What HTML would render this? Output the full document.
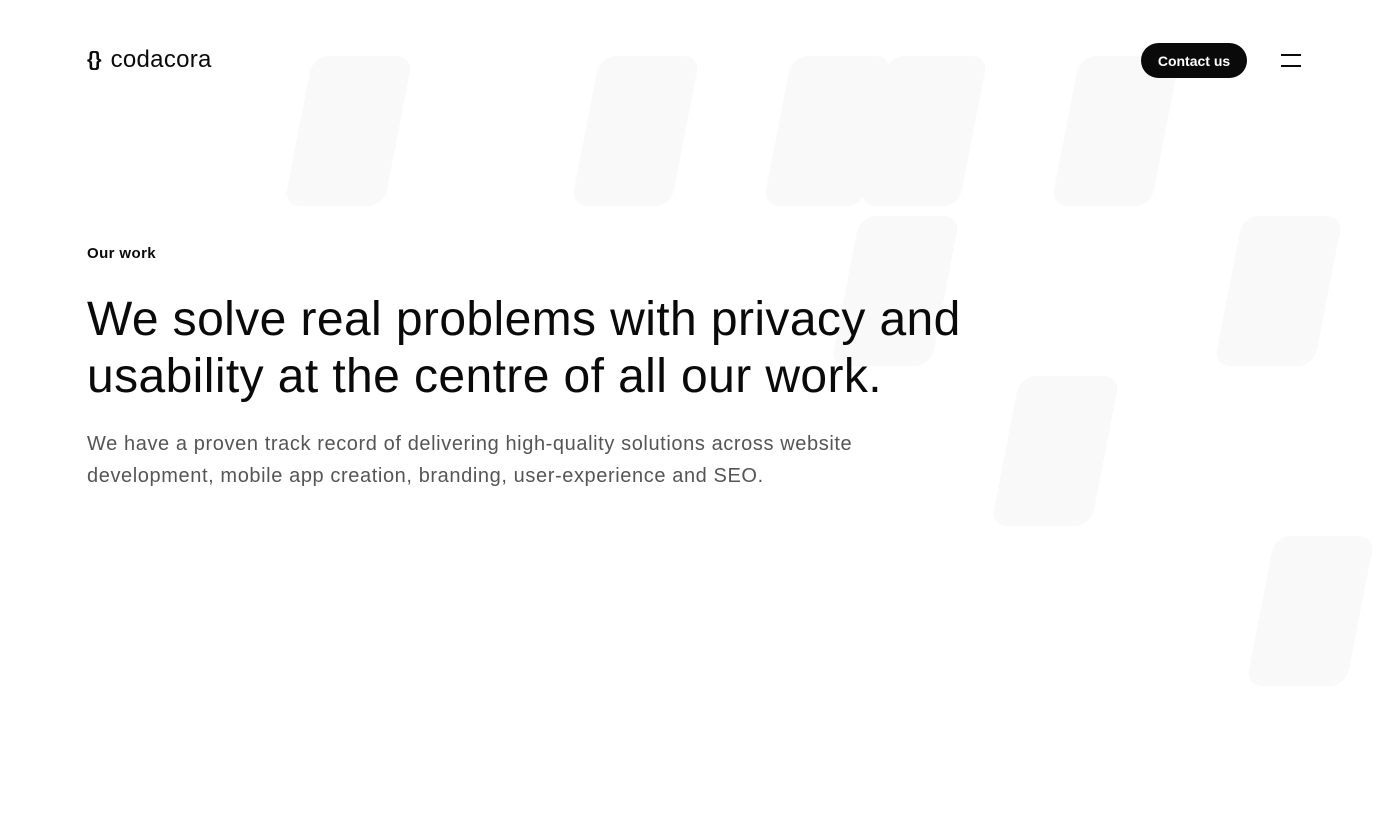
<!DOCTYPE html>
<html><head><meta charset="utf-8"><style>
body{margin:0;width:1397px;height:814px;background:#fff;overflow:hidden;position:relative;font-family:"Liberation Sans",sans-serif;color:#0a0a0a}
.c{position:absolute;width:100px;height:150px;background:#f9f9f9;border-radius:16px;transform:skewX(-11deg);transform-origin:0 0}
.logo{position:absolute;left:87px;top:46px;font-size:24px;display:flex;align-items:center;gap:10px;letter-spacing:0.3px}
.btn{position:absolute;left:1141px;top:43px;width:106px;height:35px;border-radius:18px;background:#0a0a0a;color:#fff;font-weight:bold;font-size:14px;line-height:37px;text-align:center}
.menu{position:absolute;left:1281px;top:54px;width:20px;height:2px;background:#0a0a0a}
</style></head><body>
<div class="c" style="left:313px;top:56px"></div>
<div class="c" style="left:600px;top:56px"></div>
<div class="c" style="left:792px;top:56px"></div>
<div class="c" style="left:888px;top:56px"></div>
<div class="c" style="left:1080px;top:56px"></div>
<div class="c" style="left:860px;top:216px"></div>
<div class="c" style="left:1243px;top:216px"></div>
<div class="c" style="left:1020px;top:376px"></div>
<div class="c" style="left:1275px;top:536px"></div>
<div class="logo"><span style="font-size:20px;letter-spacing:-1px;font-weight:bold">{}</span><span>codacora</span></div>
<div class="btn">Contact us</div>
<div class="menu"></div><div class="menu" style="top:65px"></div>
<div style="position:absolute;left:87px;top:245px;font-size:15px;font-weight:bold;letter-spacing:0.4px">Our work</div>
<div style="position:absolute;left:87px;top:291px;font-size:48px;line-height:57px;letter-spacing:0.4px;width:1000px">We solve real problems with privacy and<br>usability at the centre of all our work.</div>
<div style="position:absolute;left:87px;top:428px;font-size:20px;line-height:32px;color:#555;width:900px;letter-spacing:0.6px">We have a proven track record of delivering high-quality solutions across website<br>development, mobile app creation, branding, user-experience and SEO.</div>
</body></html>
